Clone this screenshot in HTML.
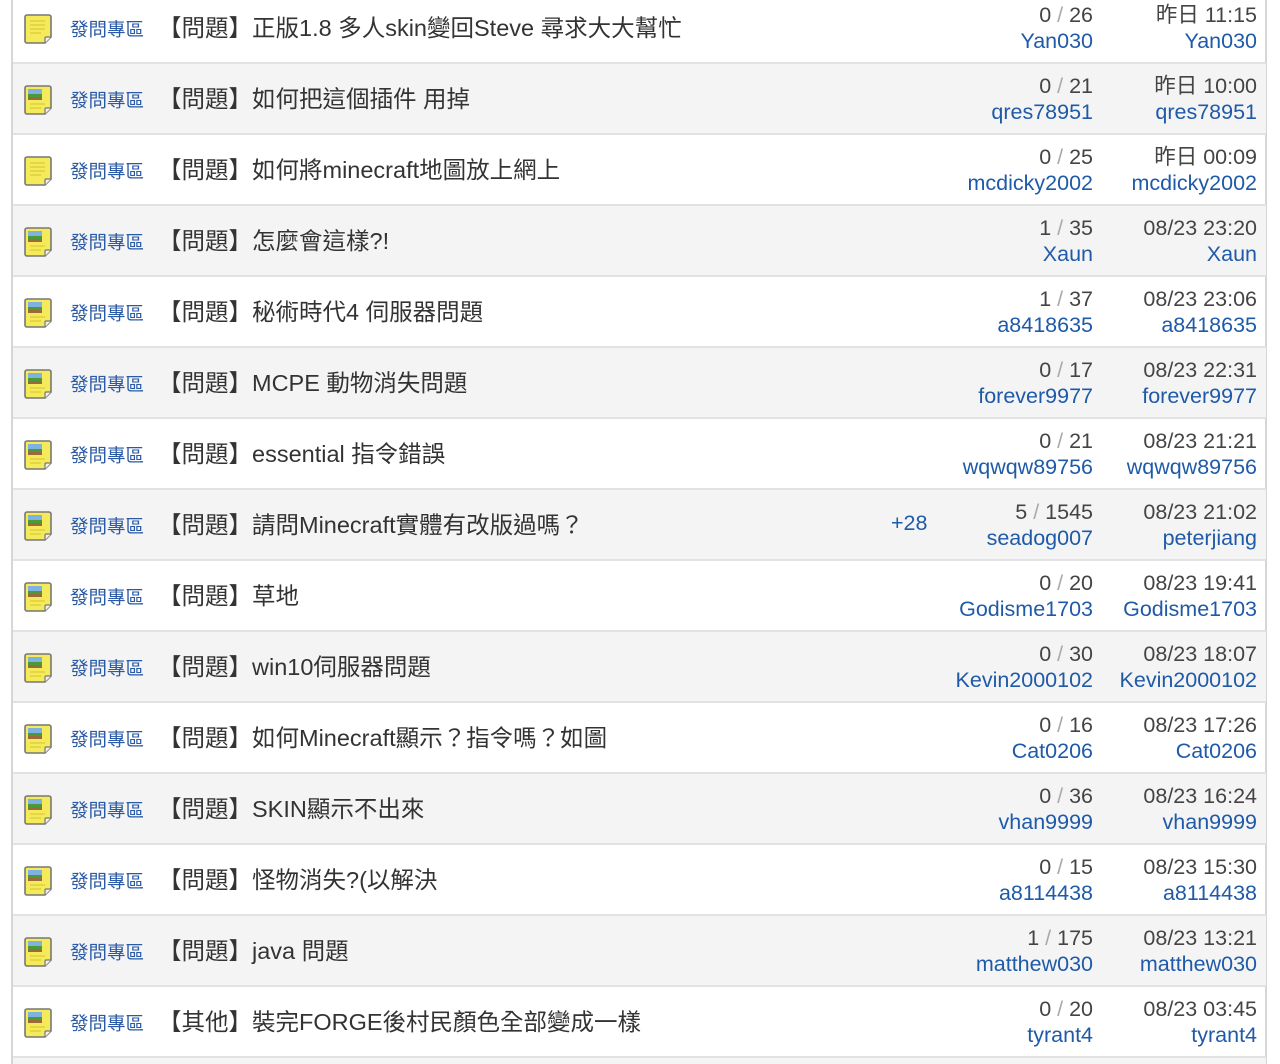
<!DOCTYPE html>
<html><head><meta charset="utf-8">
<style>
html,body{margin:0;padding:0;background:#fff;width:1280px;height:1064px;overflow:hidden;}
body{position:relative;font-family:"Liberation Sans","Noto Sans CJK TC",sans-serif;}
.frame{position:absolute;left:11px;top:0;width:1256px;height:1064px;border-left:2px solid #d6d6d6;border-right:2px solid #d6d6d6;box-sizing:border-box;}
.row{position:absolute;left:13px;width:1253px;height:69px;border-bottom:2px solid #e2e2e2;}
.row.g{background:#f4f4f4;}
.ic{position:absolute;left:11px;top:20px;width:30px;height:32px;}
.cat{position:absolute;left:57px;top:23px;font-size:18.5px;color:#2a5aa6;}
.t{position:absolute;left:145px;top:16px;font-size:23.5px;color:#333;white-space:nowrap;}
.cnt{position:absolute;right:173px;top:9px;text-align:right;font-size:21.5px;line-height:26px;color:#444;white-space:nowrap;}
.dt{position:absolute;right:9px;top:9px;text-align:right;font-size:21.5px;line-height:26px;color:#444;white-space:nowrap;}
.cnt span.s{color:#aaa;}
.u{color:#1f5aa8;}
.plus{position:absolute;left:878px;top:21px;font-size:21.5px;color:#1f5aa8;}
</style></head><body>
<div class="frame"></div>
<svg width="0" height="0" style="position:absolute">
<defs>
<g id="n1"><path d="M3 2h22a2 2 0 0 1 2 2v20l-6 6H3a2 2 0 0 1-2-2V4a2 2 0 0 1 2-2z" fill="#f4ea5a" stroke="#777" stroke-width="1.6"/><path d="M27 24h-5a1 1 0 0 0-1 1v5" fill="#eee" stroke="#777" stroke-width="1.2"/><path d="M6 8h15M6 12h15M6 16h15M6 20h11" stroke="#d9cc3a" stroke-width="1.3"/></g>
<g id="n2"><path d="M3 2h22a2 2 0 0 1 2 2v20l-6 6H3a2 2 0 0 1-2-2V4a2 2 0 0 1 2-2z" fill="#f4ea5a" stroke="#777" stroke-width="1.6"/><path d="M27 24h-5a1 1 0 0 0-1 1v5" fill="#eee" stroke="#777" stroke-width="1.2"/><rect x="4" y="5" width="14" height="5" fill="#7fb2e0"/><rect x="4" y="10" width="14" height="3" fill="#4a9a3a"/><rect x="4" y="13" width="14" height="3" fill="#9a6a3a"/><path d="M6 20h15M6 24h11" stroke="#d9cc3a" stroke-width="1.3"/></g>
</defs></svg>

<div class="row" style="top:-7px"><svg class="ic" viewBox="0 0 30 32"><use href="#n1"/></svg><div class="cat">發問專區</div><div class="t">【問題】正版1.8 多人skin變回Steve 尋求大大幫忙</div><div class="cnt">0 <span class="s">/</span> 26<br><span class="u">Yan030</span></div><div class="dt">昨日 11:15<br><span class="u">Yan030</span></div></div>
<div class="row g" style="top:64px"><svg class="ic" viewBox="0 0 30 32"><use href="#n2"/></svg><div class="cat">發問專區</div><div class="t">【問題】如何把這個插件 用掉</div><div class="cnt">0 <span class="s">/</span> 21<br><span class="u">qres78951</span></div><div class="dt">昨日 10:00<br><span class="u">qres78951</span></div></div>
<div class="row" style="top:135px"><svg class="ic" viewBox="0 0 30 32"><use href="#n1"/></svg><div class="cat">發問專區</div><div class="t">【問題】如何將minecraft地圖放上網上</div><div class="cnt">0 <span class="s">/</span> 25<br><span class="u">mcdicky2002</span></div><div class="dt">昨日 00:09<br><span class="u">mcdicky2002</span></div></div>
<div class="row g" style="top:206px"><svg class="ic" viewBox="0 0 30 32"><use href="#n2"/></svg><div class="cat">發問專區</div><div class="t">【問題】怎麼會這樣?!</div><div class="cnt">1 <span class="s">/</span> 35<br><span class="u">Xaun</span></div><div class="dt">08/23 23:20<br><span class="u">Xaun</span></div></div>
<div class="row" style="top:277px"><svg class="ic" viewBox="0 0 30 32"><use href="#n2"/></svg><div class="cat">發問專區</div><div class="t">【問題】秘術時代4 伺服器問題</div><div class="cnt">1 <span class="s">/</span> 37<br><span class="u">a8418635</span></div><div class="dt">08/23 23:06<br><span class="u">a8418635</span></div></div>
<div class="row g" style="top:348px"><svg class="ic" viewBox="0 0 30 32"><use href="#n2"/></svg><div class="cat">發問專區</div><div class="t">【問題】MCPE 動物消失問題</div><div class="cnt">0 <span class="s">/</span> 17<br><span class="u">forever9977</span></div><div class="dt">08/23 22:31<br><span class="u">forever9977</span></div></div>
<div class="row" style="top:419px"><svg class="ic" viewBox="0 0 30 32"><use href="#n2"/></svg><div class="cat">發問專區</div><div class="t">【問題】essential 指令錯誤</div><div class="cnt">0 <span class="s">/</span> 21<br><span class="u">wqwqw89756</span></div><div class="dt">08/23 21:21<br><span class="u">wqwqw89756</span></div></div>
<div class="row g" style="top:490px"><svg class="ic" viewBox="0 0 30 32"><use href="#n2"/></svg><div class="cat">發問專區</div><div class="t">【問題】請問Minecraft實體有改版過嗎？</div><div class="plus">+28</div><div class="cnt">5 <span class="s">/</span> 1545<br><span class="u">seadog007</span></div><div class="dt">08/23 21:02<br><span class="u">peterjiang</span></div></div>
<div class="row" style="top:561px"><svg class="ic" viewBox="0 0 30 32"><use href="#n2"/></svg><div class="cat">發問專區</div><div class="t">【問題】草地</div><div class="cnt">0 <span class="s">/</span> 20<br><span class="u">Godisme1703</span></div><div class="dt">08/23 19:41<br><span class="u">Godisme1703</span></div></div>
<div class="row g" style="top:632px"><svg class="ic" viewBox="0 0 30 32"><use href="#n2"/></svg><div class="cat">發問專區</div><div class="t">【問題】win10伺服器問題</div><div class="cnt">0 <span class="s">/</span> 30<br><span class="u">Kevin2000102</span></div><div class="dt">08/23 18:07<br><span class="u">Kevin2000102</span></div></div>
<div class="row" style="top:703px"><svg class="ic" viewBox="0 0 30 32"><use href="#n2"/></svg><div class="cat">發問專區</div><div class="t">【問題】如何Minecraft顯示？指令嗎？如圖</div><div class="cnt">0 <span class="s">/</span> 16<br><span class="u">Cat0206</span></div><div class="dt">08/23 17:26<br><span class="u">Cat0206</span></div></div>
<div class="row g" style="top:774px"><svg class="ic" viewBox="0 0 30 32"><use href="#n2"/></svg><div class="cat">發問專區</div><div class="t">【問題】SKIN顯示不出來</div><div class="cnt">0 <span class="s">/</span> 36<br><span class="u">vhan9999</span></div><div class="dt">08/23 16:24<br><span class="u">vhan9999</span></div></div>
<div class="row" style="top:845px"><svg class="ic" viewBox="0 0 30 32"><use href="#n2"/></svg><div class="cat">發問專區</div><div class="t">【問題】怪物消失?(以解決</div><div class="cnt">0 <span class="s">/</span> 15<br><span class="u">a8114438</span></div><div class="dt">08/23 15:30<br><span class="u">a8114438</span></div></div>
<div class="row g" style="top:916px"><svg class="ic" viewBox="0 0 30 32"><use href="#n2"/></svg><div class="cat">發問專區</div><div class="t">【問題】java 問題</div><div class="cnt">1 <span class="s">/</span> 175<br><span class="u">matthew030</span></div><div class="dt">08/23 13:21<br><span class="u">matthew030</span></div></div>
<div class="row" style="top:987px"><svg class="ic" viewBox="0 0 30 32"><use href="#n2"/></svg><div class="cat">發問專區</div><div class="t">【其他】裝完FORGE後村民顏色全部變成一樣</div><div class="cnt">0 <span class="s">/</span> 20<br><span class="u">tyrant4</span></div><div class="dt">08/23 03:45<br><span class="u">tyrant4</span></div></div>
<div class="row g" style="top:1058px;height:6px;border:0"></div>
</body></html>
